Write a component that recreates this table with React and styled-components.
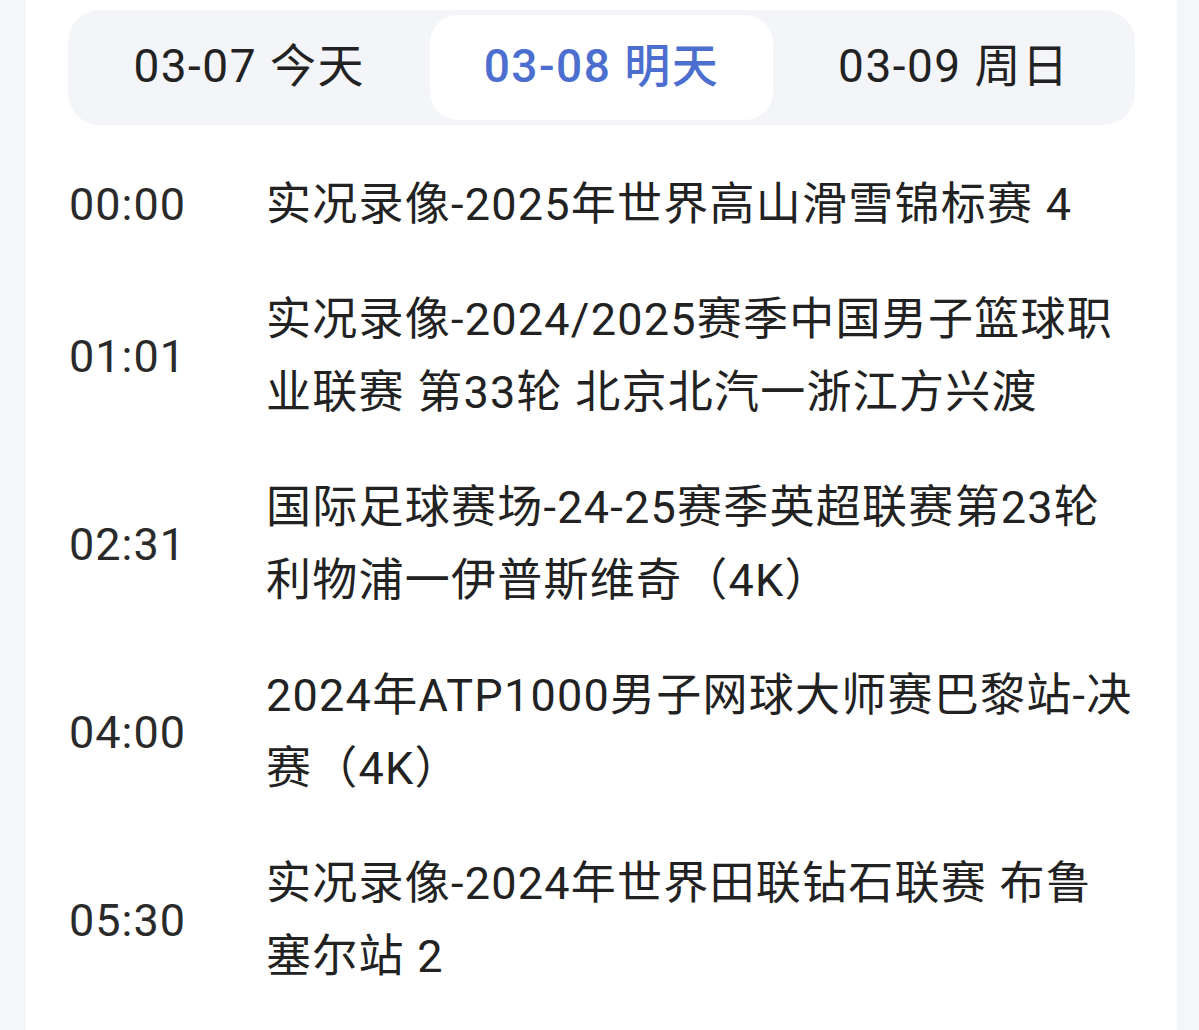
import React from "react";
import styled, { createGlobalStyle } from "styled-components";

const GlobalStyle = createGlobalStyle`
  html, body {
    margin: 0;
    padding: 0;
    background: #f4f6fa;
  }
  body {
    font-family: Roboto, "Noto Sans CJK SC", sans-serif;
  }
`;

const Card = styled.div`
  margin-left: 26px;
  width: 1151px;
  min-height: 1030px;
  background: #fff;
  padding: 10px 42px 0 42px;
  box-sizing: border-box;
`;

const TabBar = styled.div`
  display: grid;
  grid-template-columns: repeat(3, 1fr);
  height: 115px;
  padding: 5px;
  box-sizing: border-box;
  background: #f4f5f8;
  border-radius: 32px;
`;

const Tab = styled.div`
  display: flex;
  align-items: center;
  justify-content: center;
  padding-bottom: 12px;
  margin: 0 ${p => (p.$active ? "5px" : "0")};
  border-radius: 28px;
  background: ${p => (p.$active ? "#fff" : "transparent")};
  color: ${p => (p.$active ? "#4b6ecf" : "#222")};
  font-size: 46px;
  letter-spacing: 1.5px;
  font-weight: ${p => (p.$active ? 500 : 400)};
`;

const List = styled.div`
  display: flex;
  flex-direction: column;
  gap: 42px;
  margin-top: 43px;
`;

const Row = styled.div`
  display: flex;
  align-items: center;
`;

const Time = styled.div`
  flex: 0 0 197px;
  padding-left: 1px;
  font-size: 45px;
  letter-spacing: 1px;
  color: #2a2a2a;
`;

const Title = styled.div`
  flex: 1;
  font-size: 45px;
  line-height: 73px;
  letter-spacing: 1.25px;
  color: #222;
`;

const Line = styled.span`
  display: block;
  white-space: nowrap;
`;

const tabs = [
  { label: "03-07 今天" },
  { label: "03-08 明天", active: true },
  { label: "03-09 周日" },
];

const programs = [
  { time: "00:00", lines: ["实况录像-2025年世界高山滑雪锦标赛 4"] },
  {
    time: "01:01",
    lines: ["实况录像-2024/2025赛季中国男子篮球职", "业联赛 第33轮 北京北汽一浙江方兴渡"],
  },
  { time: "02:31", lines: ["国际足球赛场-24-25赛季英超联赛第23轮", "利物浦一伊普斯维奇（4K）"] },
  { time: "04:00", lines: ["2024年ATP1000男子网球大师赛巴黎站-决", "赛（4K）"] },
  { time: "05:30", lines: ["实况录像-2024年世界田联钻石联赛 布鲁", "塞尔站 2"] },
];

const App = () => {
  return (
    <>
      <GlobalStyle />
      <Card>
        <TabBar>
          {tabs.map(t => (
            <Tab key={t.label} $active={t.active}>
              {t.label}
            </Tab>
          ))}
        </TabBar>

        <List>
          {programs.map(p => (
            <Row key={p.time}>
              <Time>{p.time}</Time>
              <Title>
                {p.lines.map(l => (
                  <Line key={l}>{l}</Line>
                ))}
              </Title>
            </Row>
          ))}
        </List>
      </Card>
    </>
  );
};

export default App;
